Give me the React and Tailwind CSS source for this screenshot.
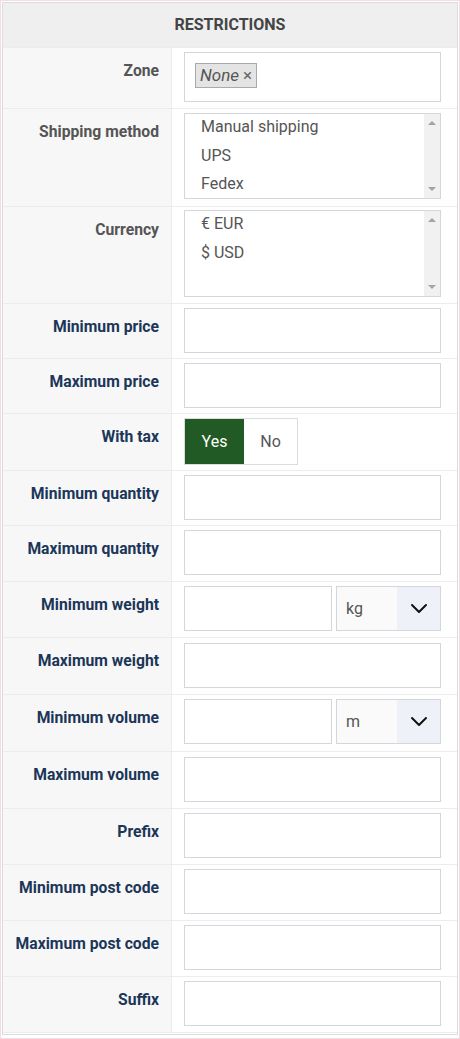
const FONT = { fontFamily: 'Roboto, "Liberation Sans", sans-serif' }

function Label({ children, muted }) {
  return (
    <div
      className={`w-[169px] shrink-0 bg-[#f7f7f7] border-r border-[#ececec] text-right pr-3 pt-[11px] text-[15.7px] leading-6 font-bold ${
        muted ? 'text-[#555]' : 'text-[#1b3658]'
      }`}
    >
      {children}
    </div>
  )
}

function Row({ label, muted, children, cellClass = 'pt-1 pb-[6px]' }) {
  return (
    <div className="flex border-t border-[#ececec]">
      <Label muted={muted}>{label}</Label>
      <div className={`flex-1 pl-3 pr-4 ${cellClass}`}>{children}</div>
    </div>
  )
}

function TextInput({ className = 'w-full' }) {
  return <div className={`h-[45px] border border-[#d3d7dd] bg-white ${className}`} />
}

function ListBox({ items, height }) {
  return (
    <div className={`flex border border-[#d3d7dd] bg-white ${height}`}>
      <div className="flex-1 pl-4 pt-[1px] text-[16px] text-[#555]">
        {items.map((it) => (
          <div key={it} className="h-[28.5px] leading-[24px]">
            {it}
          </div>
        ))}
      </div>
      <div className="w-[16px] bg-[#f1f1f1] flex flex-col justify-between items-center py-[7px]">
        <div className="w-0 h-0 border-l-[4px] border-r-[4px] border-b-[4px] border-l-transparent border-r-transparent border-b-[#a3a3a3]" />
        <div className="w-0 h-0 border-l-[4px] border-r-[4px] border-t-[4px] border-l-transparent border-r-transparent border-t-[#a3a3a3]" />
      </div>
    </div>
  )
}

function UnitSelect({ unit }) {
  return (
    <div className="w-[105px] h-[45px] border border-[#d3d7dd] flex bg-[#fafafa]">
      <div className="flex-1 pl-[9px] flex items-center text-[16px] text-[#555]">{unit}</div>
      <div className="w-[43px] bg-[#eef2f8] flex items-center justify-center">
        <svg width="18" height="11" viewBox="0 0 18 11" fill="none">
          <polyline points="2,2 9,9 16,2" stroke="#111" strokeWidth="2" strokeLinecap="round" strokeLinejoin="round" />
        </svg>
      </div>
    </div>
  )
}

export default function App() {
  return (
    <div style={FONT} className="w-[460px] border border-[#f2dde2] bg-white pb-[3px] p-px">
      <div className="border border-[#dcdcdc] bg-white">
        <div className="h-[44px] bg-[#efefef] flex items-center justify-center text-[16px] font-bold text-[#444]">
          RESTRICTIONS
        </div>

        <Row label="Zone" muted cellClass="pt-1 pb-[6px]">
          <div className="h-[50px] border border-[#d3d7dd] bg-white px-[10px] pt-[10px]">
            <span className="inline-flex items-center h-[25px] px-[4px] border border-[#aaa] bg-[#e4e4e4] text-[#555]">
              <span className="italic text-[17px]">None</span>
              <span className="ml-[4px] text-[17px] text-[#666]">×</span>
            </span>
          </div>
        </Row>

        <Row label="Shipping method" muted cellClass="pt-1 pb-[7px]">
          <ListBox items={['Manual shipping', 'UPS', 'Fedex']} height="h-[86px]" />
        </Row>

        <Row label="Currency" muted cellClass="pt-[3px] pb-[6px]">
          <ListBox items={['€ EUR', '$ USD']} height="h-[87px]" />
        </Row>

        <Row label="Minimum price" cellClass="pt-1 pb-[5px]">
          <TextInput />
        </Row>
        <Row label="Maximum price" cellClass="pt-1 pb-[5px]">
          <TextInput />
        </Row>

        <Row label="With tax" cellClass="pt-1 pb-[5px]">
          <div className="flex h-[47px] w-[114px] border border-[#dcdcdc] text-[16px]">
            <div className="w-[59px] bg-[#225a25] text-white flex items-center justify-center">Yes</div>
            <div className="flex-1 bg-white text-[#555] flex items-center justify-center">No</div>
          </div>
        </Row>

        <Row label="Minimum quantity" cellClass="pt-1 pb-[5px]">
          <TextInput />
        </Row>
        <Row label="Maximum quantity">
          <TextInput />
        </Row>

        <Row label="Minimum weight">
          <div className="flex gap-1">
            <TextInput className="w-[148px]" />
            <UnitSelect unit="kg" />
          </div>
        </Row>
        <Row label="Maximum weight" cellClass="pt-[5px] pb-[6px]">
          <TextInput />
        </Row>
        <Row label="Minimum volume" cellClass="pt-[4px] pb-[7px]">
          <div className="flex gap-1">
            <TextInput className="w-[148px]" />
            <UnitSelect unit="m" />
          </div>
        </Row>
        <Row label="Maximum volume" cellClass="pt-[5px] pb-[6px]">
          <TextInput />
        </Row>
        <Row label="Prefix">
          <TextInput />
        </Row>
        <Row label="Minimum post code">
          <TextInput />
        </Row>
        <Row label="Maximum post code">
          <TextInput />
        </Row>
        <Row label="Suffix">
          <TextInput />
        </Row>
        <div className="border-t border-[#ececec] h-[2px]" />
      </div>
    </div>
  )
}
